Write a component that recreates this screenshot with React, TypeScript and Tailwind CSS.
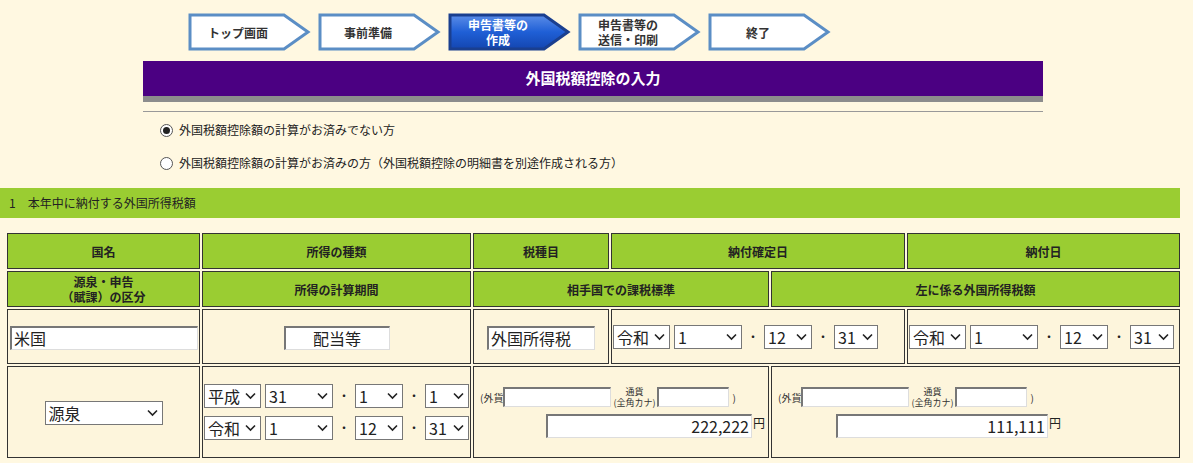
import * as React from 'react'

const font = { fontFamily: '"Noto Sans CJK JP", "Noto Sans", sans-serif' }

const Step: React.FC<{ label: string[]; active?: boolean }> = ({ label, active }) => (
    <div className="relative w-[124px] h-[38px]">
        <svg width="124" height="38" className="absolute inset-0">
            <defs>
                <linearGradient id="act" x1="0" y1="0" x2="0" y2="1">
                    <stop offset="0" stopColor="#5b8de8" />
                    <stop offset="0.5" stopColor="#1f5fd6" />
                    <stop offset="1" stopColor="#1446b0" />
                </linearGradient>
            </defs>
            <polygon
                points="2,2 96,2 120,19 96,36 2,36"
                fill={active ? 'url(#act)' : '#fff'}
                stroke={active ? '#1a3f8f' : '#5b8ec5'}
                strokeWidth="3"
            />
        </svg>
        <div className={`relative h-full w-[100px] flex flex-col items-center justify-center text-[12px] font-bold leading-[15px] ${active ? 'text-white' : 'text-[#333]'}`}>
            {label.map(l => <span key={l}>{l}</span>)}
        </div>
    </div>
)

const Sel: React.FC<{ v: string; w: string }> = ({ v, w }) => (
    <span className={`inline-flex items-center justify-between h-[24px] bg-white border border-[#777] pl-[3px] pr-[4px] text-[16px] text-[#222] ${w}`}>
        <span>{v}</span>
        <svg width="11" height="8" viewBox="0 0 11 8"><path d="M1 1.5 L5.5 6 L10 1.5" stroke="#222" strokeWidth="1.6" fill="none" /></svg>
    </span>
)

const Dot = () => <span className="mx-[5px] text-[12px]">・</span>

const DateRow: React.FC<{ era: string; y: string; m: string; d: string }> = ({ era, y, m, d }) => (
    <div className="flex items-center">
        <Sel v={era} w="w-[57px]" />
        <span className="w-[4px]" />
        <Sel v={y} w="w-[68px]" />
        <Dot />
        <Sel v={m} w="w-[48px]" />
        <Dot />
        <Sel v={d} w="w-[44px]" />
    </div>
)

const Box: React.FC<{ v?: string; w: string; right?: boolean }> = ({ v, w, right }) => (
    <span className={`inline-block align-middle h-[24px] bg-white border-t-2 border-l-2 border-[#777] border-b border-r border-b-[#ddd] border-r-[#ddd] px-[2px] text-[16px] leading-[21px] text-[#222] ${right ? 'text-right' : ''} ${w}`}>{v}</span>
)

const SmallBox: React.FC<{ w: string }> = ({ w }) => (
    <span className={`inline-block h-[20px] bg-white border-t-2 border-l-2 border-[#777] border-b border-r border-b-[#ddd] border-r-[#ddd] ${w}`} />
)

const Amount: React.FC<{ v: string; boxW: string; w1: string; indent: string }> = ({ v, boxW, w1, indent }) => (
    <div className="flex flex-col items-start gap-[6px]">
        <div className="flex items-center text-[10px] text-[#333]">
            <span>(外貨</span>
            <SmallBox w={w1} />
            <span className="flex flex-col items-center leading-[11px] mx-[2px] text-[9px]"><span>通貨</span><span>(全角カナ)</span></span>
            <SmallBox w="w-[72px]" />
            <span className="ml-[3px]">)</span>
        </div>
        <div className={`flex items-start ${indent}`}>
            <Box v={v} w={boxW} right />
            <span className="text-[12px] ml-[1px]">円</span>
        </div>
    </div>
)

const th = 'bg-[#9acd32] border border-[#333] text-center text-[12px] font-bold text-[#222] leading-[15px]'
const td = 'bg-[#fdf5dc] border border-[#333] p-0'

export default function App() {
    return (
        <div className="bg-[#fff8e1] w-[1193px] h-[463px] overflow-hidden text-[#222]" style={font}>
            <div className="flex gap-[6px] pl-[188px] pt-[13px]">
                <Step label={['トップ画面']} />
                <Step label={['事前準備']} />
                <Step label={['申告書等の', '作成']} active />
                <Step label={['申告書等の', '送信・印刷']} />
                <Step label={['終了']} />
            </div>
            <div className="ml-[143px] w-[900px] mt-[10px]">
                <div className="h-[35px] bg-[#4b0082] text-white font-bold text-[15px] flex items-center justify-center">外国税額控除の入力</div>
                <div className="h-[6px] bg-[#8c8c8c]" />
                <div className="h-px bg-[#999] mt-[9px]" />
            </div>
            <div className="ml-[160px] mt-[9px] text-[12px] flex flex-col gap-[15px]">
                <label className="flex items-center gap-[6px]">
                    <span className="w-[13px] h-[13px] rounded-full border border-[#555] bg-white flex items-center justify-center"><span className="w-[7px] h-[7px] rounded-full bg-[#222]" /></span>
                    外国税額控除額の計算がお済みでない方
                </label>
                <label className="flex items-center gap-[6px]">
                    <span className="w-[13px] h-[13px] rounded-full border border-[#555] bg-white" />
                    外国税額控除額の計算がお済みの方（外国税額控除の明細書を別途作成される方）
                </label>
            </div>
            <div className="mt-[16px] w-[1180px] h-[30px] bg-[#9acd32] text-[12px] flex items-center pl-[9px]">1　本年中に納付する外国所得税額</div>
            <table className="ml-[5px] mt-[13px] table-fixed border-separate border-spacing-[2px] w-[1177px]">
                <colgroup>
                    <col className="w-[193px]" />
                    <col className="w-[269px]" />
                    <col className="w-[136px]" />
                    <col className="w-[158px]" />
                    <col className="w-[134px]" />
                    <col />
                </colgroup>
                <tbody>
                    <tr className="h-[36px]">
                        <td className={th}>国名</td>
                        <td className={th}>所得の種類</td>
                        <td className={th}>税種目</td>
                        <td className={th} colSpan={2}>納付確定日</td>
                        <td className={th}>納付日</td>
                    </tr>
                    <tr className="h-[36px]">
                        <td className={th}>源泉・申告<br />（賦課）の区分</td>
                        <td className={th}>所得の計算期間</td>
                        <td className={th} colSpan={2}>相手国での課税標準</td>
                        <td className={th} colSpan={2}>左に係る外国所得税額</td>
                    </tr>
                    <tr className="h-[55px]">
                        <td className={`${td} px-[2px]`}><Box v="米国" w="w-[188px]" /></td>
                        <td className={`${td} text-center`}><Box v="配当等" w="w-[106px]" /></td>
                        <td className={`${td} px-[13px]`}><Box v="外国所得税" w="w-[108px]" /></td>
                        <td className={`${td} px-[1px]`} colSpan={2}><DateRow era="令和" y="1" m="12" d="31" /></td>
                        <td className={`${td} px-[1px]`}><DateRow era="令和" y="1" m="12" d="31" /></td>
                    </tr>
                    <tr className="h-[92px]">
                        <td className={`${td} text-center`}><Sel v="源泉" w="w-[118px] align-middle" /></td>
                        <td className={`${td} px-[1px]`}>
                            <div className="flex flex-col gap-[8px]">
                                <DateRow era="平成" y="31" m="1" d="1" />
                                <DateRow era="令和" y="1" m="12" d="31" />
                            </div>
                        </td>
                        <td className={`${td} pl-[6px]`} colSpan={2}><Amount v="222,222" boxW="w-[206px]" w1="w-[108px]" indent="ml-[66px]" /></td>
                        <td className={`${td} pl-[6px]`} colSpan={2}><Amount v="111,111" boxW="w-[212px]" w1="w-[108px]" indent="ml-[58px]" /></td>
                    </tr>
                </tbody>
            </table>
        </div>
    )
}
